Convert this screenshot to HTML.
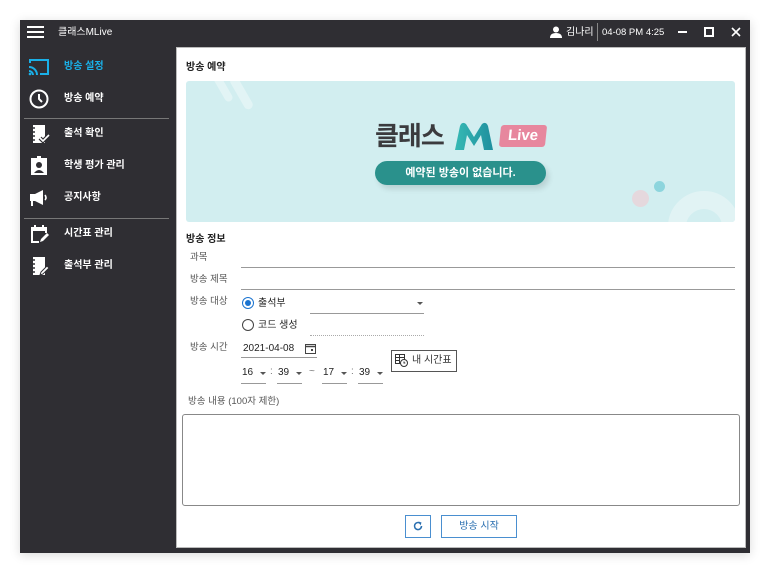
<!DOCTYPE html>
<html><head><meta charset="utf-8"><style>
*{margin:0;padding:0;box-sizing:border-box}
body{width:770px;height:573px;background:#fff;font-family:"Liberation Sans","Noto Sans CJK KR",sans-serif;position:relative;overflow:hidden}
.a{position:absolute}
.win{position:absolute;left:20px;top:20px;width:730px;height:533px;background:#2f2e33;box-shadow:0 2px 10px rgba(0,0,0,.15)}
.tb{color:#fff;font-size:10px}
.item{position:absolute;left:64px;font-size:10px;color:#fff;font-weight:bold;line-height:16px}
.sep{position:absolute;left:24px;width:145px;height:1px;background:#777}
.main{position:absolute;left:176px;top:47px;width:570px;height:501px;background:#fff;border:1px solid #bbb}
.lbl{position:absolute;font-size:9.5px;color:#555;line-height:16px}
.txt{position:absolute;font-size:10px;color:#222;line-height:16px}
.ln{position:absolute;height:1px;background:#999}
.dd{position:absolute;width:0;height:0;border-left:3px solid transparent;border-right:3px solid transparent;border-top:3px solid #555}
</style></head><body>
<div class="win"></div>
<div class="a" style="left:27px;top:26px;width:17px;height:2px;background:#fff;box-shadow:0 5px 0 #fff,0 10px 0 #fff"></div>
<div class="a tb" style="left:58px;top:25px;line-height:16px">클래스MLive</div>
<svg class="a" style="left:550px;top:26px" width="12" height="12" viewBox="0 0 12 12"><circle cx="6" cy="3.5" r="3" fill="#fff"/><path d="M0 12 Q0 7 6 7 Q12 7 12 12Z" fill="#fff"/></svg>
<div class="a tb" style="left:566px;top:25px;line-height:16px">김나리</div>
<div class="a" style="left:597px;top:23px;width:1px;height:18px;background:#888"></div>
<div class="a tb" style="left:602px;top:25px;line-height:16px;font-size:9.5px">04-08 PM 4:25</div>
<div class="a" style="left:678px;top:31px;width:9px;height:2px;background:#fff"></div>
<div class="a" style="left:704px;top:27px;width:10px;height:10px;border:2px solid #fff"></div>
<svg class="a" style="left:731px;top:27px" width="10" height="10" viewBox="0 0 10 10"><path d="M1 1l8 8M9 1l-8 8" stroke="#fff" stroke-width="1.6"/></svg>
<svg class="a" style="left:28px;top:58px" width="22" height="18" viewBox="0 0 22 18"><path d="M2 5V2h18v14h-8" fill="none" stroke="#1ab0e8" stroke-width="2"/><path d="M1 9a8 8 0 0 1 8 8M1 13a4 4 0 0 1 4 4" fill="none" stroke="#1ab0e8" stroke-width="2"/><circle cx="2" cy="16" r="1.3" fill="#1ab0e8"/></svg>
<div class="item" style="top:59px;color:#1ab0e8">방송 설정</div>
<svg class="a" style="left:29px;top:89px" width="20" height="20" viewBox="0 0 20 20"><circle cx="10" cy="10" r="8.5" fill="none" stroke="#fff" stroke-width="2"/><path d="M10 5v5l3 3" fill="none" stroke="#fff" stroke-width="2"/></svg>
<div class="item" style="top:91px">방송 예약</div>
<div class="sep" style="top:118px"></div>
<svg class="a" style="left:30px;top:124px" width="20" height="20" viewBox="0 0 20 20"><rect x="3" y="1" width="12" height="18" fill="#fff"/><path d="M1 4h4M1 8h4M1 12h4M1 16h4" stroke="#2f2e33" stroke-width="1.5"/><path d="M10 14l3 3 6-6" fill="none" stroke="#2f2e33" stroke-width="4"/><path d="M10 14l3 3 6-6" fill="none" stroke="#fff" stroke-width="1.6"/></svg>
<div class="item" style="top:126px">출석 확인</div>
<svg class="a" style="left:30px;top:156px" width="18" height="20" viewBox="0 0 18 20"><rect x="1" y="2" width="16" height="17" fill="#fff"/><circle cx="9" cy="9" r="3" fill="#2f2e33"/><path d="M4 17q5-6 10 0Z" fill="#2f2e33"/><rect x="7" y="0" width="4" height="3" fill="#fff"/></svg>
<div class="item" style="top:158px">학생 평가 관리</div>
<svg class="a" style="left:29px;top:189px" width="22" height="18" viewBox="0 0 22 18"><path d="M1 5h5l8-4v15l-8-4H4v5H2v-5H1Z" fill="#fff"/><path d="M16 6q2 3 0 5" fill="none" stroke="#fff" stroke-width="1.6"/></svg>
<div class="item" style="top:190px">공지사항</div>
<div class="sep" style="top:218px"></div>
<svg class="a" style="left:30px;top:224px" width="20" height="20" viewBox="0 0 20 20"><path d="M9 18H2V4h14v5" fill="none" stroke="#fff" stroke-width="2"/><path d="M2 4h14v3H2z" fill="#fff"/><path d="M5 1v4M13 1v4" stroke="#fff" stroke-width="2"/><path d="M10 18l1-3 6-6 2 2-6 6z" fill="#fff"/></svg>
<div class="item" style="top:226px">시간표 관리</div>
<svg class="a" style="left:30px;top:256px" width="20" height="20" viewBox="0 0 20 20"><rect x="3" y="1" width="12" height="18" fill="#fff"/><path d="M1 4h4M1 8h4M1 12h4M1 16h4" stroke="#2f2e33" stroke-width="1.5"/><path d="M10 19l1-3 6-6 2 2-6 6z" fill="#fff" stroke="#2f2e33" stroke-width="1"/></svg>
<div class="item" style="top:258px">출석부 관리</div>
<div class="main"></div>
<div class="txt" style="left:186px;top:60px;font-weight:bold">방송 예약</div>
<div class="a" style="left:186px;top:81px;width:549px;height:141px;background:#d2eef0;border-radius:3px;overflow:hidden">
 <div class="a" style="left:33px;top:-8px;width:8px;height:30px;background:#e2f4f5;transform:rotate(-30deg);border-radius:4px"></div>
 <div class="a" style="left:51px;top:-6px;width:9px;height:36px;background:#e2f4f5;transform:rotate(-30deg);border-radius:5px"></div>
 <div class="a" style="left:446px;top:109px;width:17px;height:17px;border-radius:50%;background:#e5d8dd"></div>
 <div class="a" style="left:468px;top:100px;width:11px;height:11px;border-radius:50%;background:#8dd5dd"></div>
 <div class="a" style="left:482px;top:110px;width:72px;height:72px;border-radius:50%;border:18px solid #e1f3f4"></div>
 <div class="a" style="left:189px;top:40px;font-size:26px;font-weight:bold;color:#3b3b3e;letter-spacing:-1px;line-height:30px">클래스</div>
 <svg class="a" style="left:267px;top:40px" width="42" height="30" viewBox="0 0 42 30"><defs><linearGradient id="g" x1="0" x2="1"><stop offset="0" stop-color="#36b9b4"/><stop offset="1" stop-color="#1f8f9e"/></linearGradient></defs><path d="M2 29L7 5Q9 0 13 3L21 16L29 3Q33 0 35 5L40 29H31L28 14L21 25L14 14L11 29Z" fill="url(#g)"/></svg>
 <div class="a" style="left:314px;top:44px;width:46px;height:22px;background:#e7879e;border-radius:3px;color:#fff;font-weight:bold;font-size:15px;text-align:center;line-height:22px;transform:skewX(-6deg)">Live</div>
 <div class="a" style="left:189px;top:80px;width:171px;height:24px;background:#2a918c;border-radius:12px;box-shadow:3px 4px 6px rgba(0,0,0,.12);color:#fff;font-weight:bold;font-size:11px;text-align:center;line-height:24px">예약된 방송이 없습니다.</div>
</div>
<div class="txt" style="left:186px;top:232px;font-weight:bold">방송 정보</div>
<div class="lbl" style="left:190px;top:250px">과목</div>
<div class="ln" style="left:241px;top:267px;width:494px"></div>
<div class="lbl" style="left:190px;top:272px">방송 제목</div>
<div class="ln" style="left:241px;top:289px;width:494px"></div>
<div class="lbl" style="left:190px;top:294px">방송 대상</div>
<div class="a" style="left:242px;top:297px;width:12px;height:12px;border-radius:50%;border:1.5px solid #1a73d0"></div>
<div class="a" style="left:245px;top:300px;width:6px;height:6px;border-radius:50%;background:#1a73d0"></div>
<div class="txt" style="left:258px;top:296px">출석부</div>
<div class="ln" style="left:310px;top:313px;width:114px"></div>
<div class="dd" style="left:417px;top:302px"></div>
<div class="a" style="left:242px;top:319px;width:12px;height:12px;border-radius:50%;border:1.2px solid #444"></div>
<div class="txt" style="left:258px;top:318px">코드 생성</div>
<div class="a" style="left:310px;top:335px;width:114px;border-top:1px dotted #aaa"></div>
<div class="lbl" style="left:190px;top:340px">방송 시간</div>
<div class="txt" style="left:243px;top:341px">2021-04-08</div>
<svg class="a" style="left:305px;top:343px" width="11" height="11" viewBox="0 0 11 11"><rect x=".5" y="1.5" width="10" height="9" fill="none" stroke="#444"/><path d="M.5 3.5h10" stroke="#444" stroke-width="1.5"/><rect x="6" y="6" width="2" height="2" fill="#444"/></svg>
<div class="ln" style="left:241px;top:357px;width:76px"></div>
<div class="txt" style="left:242px;top:365px">16</div><div class="dd" style="left:260px;top:372px"></div><div class="ln" style="left:241px;top:383px;width:25px"></div>
<div class="txt" style="left:270px;top:364px;color:#777">:</div>
<div class="txt" style="left:278px;top:365px">39</div><div class="dd" style="left:296px;top:372px"></div><div class="ln" style="left:277px;top:383px;width:25px"></div>
<div class="txt" style="left:309px;top:364px;color:#777">~</div>
<div class="txt" style="left:323px;top:365px">17</div><div class="dd" style="left:341px;top:372px"></div><div class="ln" style="left:322px;top:383px;width:25px"></div>
<div class="txt" style="left:351px;top:364px;color:#777">:</div>
<div class="txt" style="left:359px;top:365px">39</div><div class="dd" style="left:377px;top:372px"></div><div class="ln" style="left:358px;top:383px;width:25px"></div>
<div class="a" style="left:391px;top:350px;width:66px;height:22px;border:1px solid #555;background:#fff"></div>
<svg class="a" style="left:395px;top:354px" width="13" height="13" viewBox="0 0 13 13"><rect x=".5" y=".5" width="9" height="9" fill="none" stroke="#333"/><path d="M.5 3.5h9M4.5 .5v9M.5 6.5h4" stroke="#333"/><circle cx="9" cy="9" r="3.5" fill="#fff" stroke="#333"/><path d="M9 7.5V9h1.3" stroke="#333" fill="none"/></svg>
<div class="txt" style="left:412px;top:353px;color:#333">내 시간표</div>
<div class="lbl" style="left:188px;top:394px">방송 내용 (100자 제한)</div>
<div class="a" style="left:182px;top:414px;width:558px;height:92px;border:1px solid #888;border-radius:3px"></div>
<div class="a" style="left:405px;top:515px;width:26px;height:23px;border:1px solid #4a8fd0"></div>
<svg class="a" style="left:413px;top:521px" width="10" height="10" viewBox="0 0 10 10"><path d="M8.5 5A3.5 3.5 0 1 1 7 2.2" fill="none" stroke="#2a6fb0" stroke-width="1.5"/><path d="M5.5 0.5L8.5 1.5L7.5 4.5Z" fill="#2a6fb0"/></svg>
<div class="a" style="left:441px;top:515px;width:76px;height:23px;border:1px solid #4a8fd0;color:#2a6fb0;font-size:10px;text-align:center;line-height:21px">방송 시작</div>
</body></html>
